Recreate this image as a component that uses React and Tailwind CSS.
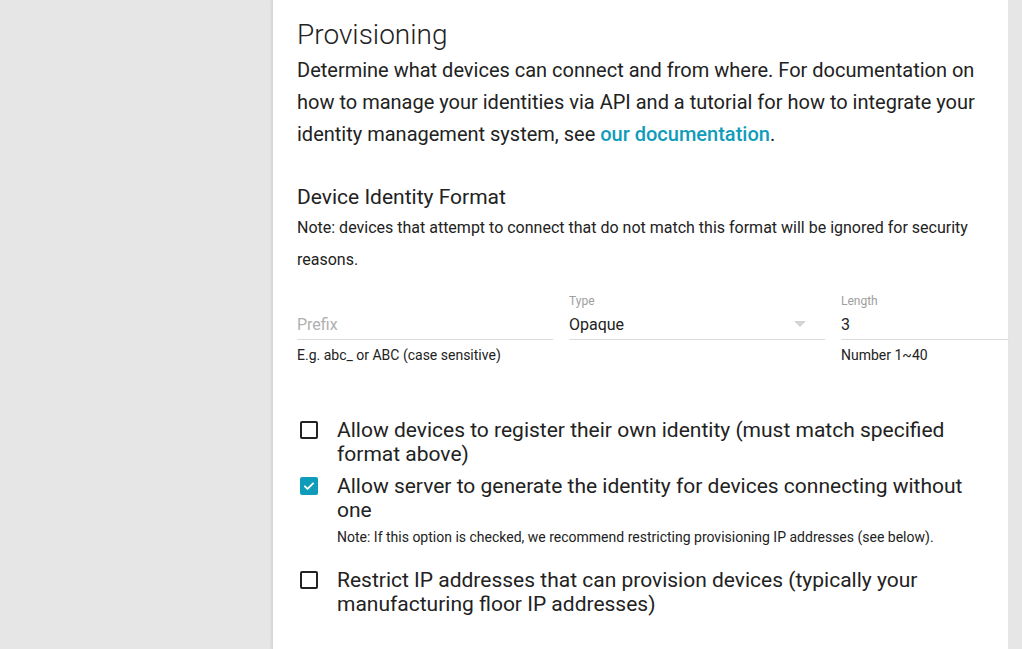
import React, { useState } from 'react';

const Checkbox = ({ checked, onChange }) => (
    <button
        type="button"
        onClick={onChange}
        className="w-6 h-6 flex items-center justify-center shrink-0"
    >
        {checked ? (
            <span className="w-[18px] h-[18px] rounded-[2px] bg-[#0f9cbb] flex items-center justify-center">
                <svg width="14" height="14" viewBox="0 0 24 24" fill="none" stroke="white" strokeWidth="3.2" strokeLinecap="round" strokeLinejoin="round">
                    <path d="M5 12.5l4.5 4.5L19 7.5" />
                </svg>
            </span>
        ) : (
            <span className="w-[18px] h-[18px] rounded-[2px] border-2 border-[#222]" />
        )}
    </button>
);

const Field = ({ label, value, placeholder, helper, width, select }) => (
    <div className={`${width} shrink-0 flex flex-col`}>
        <div className="h-[18px] text-[12px] leading-[18px] text-[#9e9e9e]">{label}</div>
        <div className="h-[30px] flex items-center justify-between border-b border-[#dcdcdc] text-[16px]">
            {value ? (
                <span className="text-[#222]">{value}</span>
            ) : (
                <span className="text-[#b0b0b0]">{placeholder}</span>
            )}
            {select && (
                <svg width="12" height="6" viewBox="0 0 12 6" className="mr-[19px] mt-[-2px]">
                    <path d="M0 0h12L6 6z" fill="#d4d4d4" />
                </svg>
            )}
        </div>
        <div className="h-[20px] mt-[5px] text-[14px] leading-[20px] text-[#222]">{helper}</div>
    </div>
);

export default function App() {
    const [opts, setOpts] = useState({ register: false, generate: true, restrict: false });
    const toggle = (k) => setOpts((o) => ({ ...o, [k]: !o[k] }));

    return (
        <div className="w-[1022px] h-[649px] overflow-hidden bg-[#e6e6e6] flex font-['Roboto',sans-serif] text-[#222]">
            <div className="w-[272px] shrink-0" />
            <div className="w-[736px] shrink-0 bg-white border-l border-[#d6d6d6] shadow-[-1px_0_2px_rgba(0,0,0,0.08)] px-6 pt-[17px]">
                <h1 className="text-[28px] leading-[36px] font-light text-[#222]">Provisioning</h1>
                <p className="mt-[1px] text-[20px] leading-[32px]">
                    Determine what devices can connect and from where. For documentation on how to manage your identities via API and a tutorial for how to integrate your identity management system, see{' '}
                    <a href="#" className="text-[#0f9cbb] font-medium">our documentation</a>.
                </p>

                <h2 className="mt-[35px] text-[21px] leading-[24px]">Device Identity Format</h2>
                <p className="mt-[3px] text-[16px] leading-[32px]">
                    Note: devices that attempt to connect that do not match this format will be ignored for security reasons.
                </p>

                <div className="mt-[16px] flex gap-4">
                    <Field width="w-[256px]" placeholder="Prefix" helper="E.g. abc_ or ABC (case sensitive)" />
                    <Field width="w-[256px]" label="Type" value="Opaque" select />
                    <Field width="w-[168px]" label="Length" value="3" helper="Number 1~40" />
                </div>

                <div className="mt-[53px] flex flex-col">
                    <div className="flex gap-4 items-start">
                        <Checkbox checked={opts.register} onChange={() => toggle('register')} />
                        <span className="text-[21px] leading-[24px] pr-[16px]">
                            Allow devices to register their own identity (must match specified format above)
                        </span>
                    </div>
                    <div className="mt-[8px] flex gap-4 items-start">
                        <Checkbox checked={opts.generate} onChange={() => toggle('generate')} />
                        <div className="flex flex-col">
                            <span className="text-[21px] leading-[24px] pr-[16px]">
                                Allow server to generate the identity for devices connecting without one
                            </span>
                            <span className="mt-[7px] text-[14px] leading-[16px]">
                                Note: If this option is checked, we recommend restricting provisioning IP addresses (see below).
                            </span>
                        </div>
                    </div>
                    <div className="mt-[23px] flex gap-4 items-start">
                        <Checkbox checked={opts.restrict} onChange={() => toggle('restrict')} />
                        <span className="text-[21px] leading-[24px] pr-[16px]">
                            Restrict IP addresses that can provision devices (typically your manufacturing floor IP addresses)
                        </span>
                    </div>
                </div>
            </div>
        </div>
    );
}
